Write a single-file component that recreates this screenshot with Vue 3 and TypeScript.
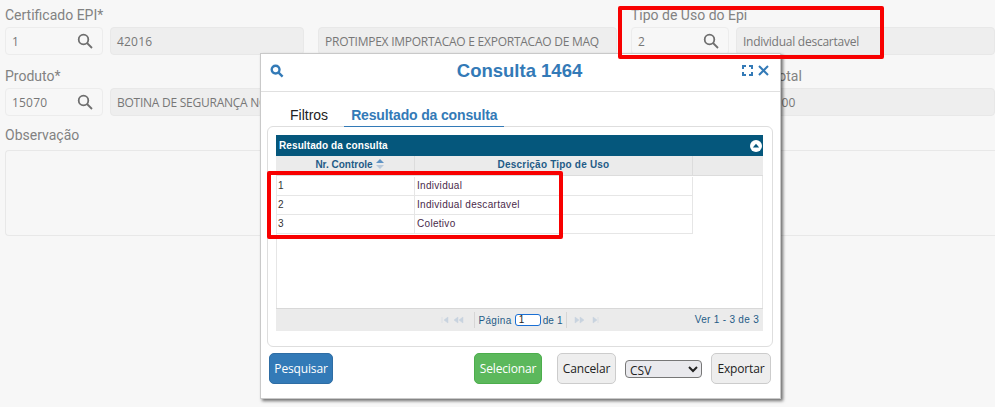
<script setup lang="ts">
const rows: [string, string][] = [
  ['1', 'Individual'],
  ['2', 'Individual descartavel'],
  ['3', 'Coletivo'],
]
</script>

<template>
  <div class="page">
    <div class="form">
      <div class="row">
        <div class="field w98">
          <label>Certificado EPI*</label>
          <div class="input num"><span>1</span><svg class="lens" viewBox="0 0 16 16"><circle cx="6.5" cy="6.5" r="4.8" /><path d="M10 10l5 5" /></svg></div>
        </div>
        <div class="field w194">
          <label>&nbsp;</label>
          <div class="input ro num"><span>42016</span></div>
        </div>
        <div class="field w299 ml">
          <label>&nbsp;</label>
          <div class="input ro"><span>PROTIMPEX IMPORTACAO E EXPORTACAO DE MAQ</span></div>
        </div>
        <div class="field w98 ml">
          <label>Tipo de Uso do Epi</label>
          <div class="input num"><span>2</span><svg class="lens" viewBox="0 0 16 16"><circle cx="6.5" cy="6.5" r="4.8" /><path d="M10 10l5 5" /></svg></div>
        </div>
        <div class="field grow">
          <label>&nbsp;</label>
          <div class="input ro"><span>Individual descartavel</span></div>
        </div>
      </div>
      <div class="row">
        <div class="field w98">
          <label>Produto*</label>
          <div class="input num"><span>15070</span><svg class="lens" viewBox="0 0 16 16"><circle cx="6.5" cy="6.5" r="4.8" /><path d="M10 10l5 5" /></svg></div>
        </div>
        <div class="field w500">
          <label>&nbsp;</label>
          <div class="input ro"><span>BOTINA DE SEGURANÇA NOBUCK</span></div>
        </div>
        <div class="field grow total">
          <label>Valor Total</label>
          <div class="input ro num"><span>100,00</span></div>
        </div>
      </div>
      <div class="obs">
        <label>Observação</label>
        <div class="area"></div>
      </div>
    </div>

    <div class="modal">
      <header class="m-head">
        <svg class="m-search" viewBox="0 0 14 14"><circle cx="5.6" cy="5.6" r="3.9" /><path d="M8.6 8.6l4 4" /></svg>
        <h1>Consulta 1464</h1>
        <div class="m-tools">
          <svg class="m-expand" viewBox="0 0 11 11"><path d="M1 4V1h3M7 1h3v3M10 7v3H7M4 10H1V7" /></svg>
          <svg class="m-close" viewBox="0 0 11 11"><path d="M1 1l9 9M10 1l-9 9" /></svg>
        </div>
      </header>
      <div class="m-body">
        <nav class="tabs">
          <a class="tab">Filtros</a>
          <a class="tab active">Resultado da consulta</a>
        </nav>
        <section class="panel">
          <div class="grid">
            <div class="g-title">
              <span>Resultado da consulta</span>
              <svg class="collapse" viewBox="0 0 12 12"><circle cx="6" cy="6" r="6" fill="#fff" /><path d="M2.8 7.4L6 3.8l3.2 3.6z" fill="#05577c" /></svg>
            </div>
            <div class="g-head">
              <div class="c1"><span class="nr">Nr. Controle</span> <svg class="sort" viewBox="0 0 8 10"><path d="M4 0l4 4H0z" fill="#5f93c4" /><path d="M4 10L0 6h8z" fill="#b9c9da" /></svg></div>
              <div class="c2">Descrição Tipo de Uso</div>
              <div class="c3"></div>
            </div>
            <div class="g-body">
              <div v-for="r in rows" :key="r[0]" class="g-row">
                <div class="c1">{{ r[0] }}</div>
                <div class="c2">{{ r[1] }}</div>
              </div>
            </div>
            <div class="pager">
              <div class="p-center">
                <svg class="p-ico" viewBox="0 0 26 8"><path d="M1 1v6M3 4l4-3v6zM18 4l4-3v6zM13 4l4-3v6z" /></svg>
                <i class="sep"></i>
                <span>Página</span><span class="p-input">1</span><span class="p-of">de 1</span>
                <i class="sep"></i>
                <svg class="p-ico" viewBox="0 0 26 8"><path d="M1 1l4 3-4 3zM6 1l4 3-4 3zM19 1l4 3-4 3zM24 1v6" /></svg>
              </div>
              <span class="p-info">Ver 1 - 3 de 3</span>
            </div>
          </div>
        </section>
        <footer class="actions">
          <button class="btn primary">Pesquisar</button>
          <button class="btn success">Selecionar</button>
          <button class="btn cancel">Cancelar</button>
          <select class="fmt"><option>CSV</option></select>
          <button class="btn export">Exportar</button>
        </footer>
      </div>
    </div>

    <div class="mark mark-a"></div>
    <div class="mark mark-b"></div>
  </div>
</template>

<style>
html, body { margin: 0; background: #f7f7f7; }
</style>

<style scoped>
.page {
  position: relative;
  width: 995px;
  height: 407px;
  overflow: hidden;
  background: #f7f7f7;
  font-family: "Open Sans", sans-serif;
  color: #777;
}
.form { padding: 5px 0 0 5px; }
.row { display: flex; gap: 7px; margin-bottom: 11px; }
.field { display: flex; flex-direction: column; flex: none; min-width: 0; }
.w98 { width: 98px; }
.w194 { width: 194px; }
.w299 { width: 299px; }
.w500 { width: 619px; }
.ml { margin-left: 7px; }
.grow { flex: 1; min-width: 0; }
label {
  display: block;
  height: 22px;
  line-height: 20px;
  font-family: Roboto, sans-serif;
  font-size: 14px;
  color: #828282;
  white-space: nowrap;
}
.input {
  box-sizing: border-box;
  height: 28px;
  display: flex;
  align-items: center;
  justify-content: space-between;
  padding: 0 9px 0 6px;
  border: 1px solid #ececec;
  border-radius: 4px;
  font-size: 12px;
  letter-spacing: -0.25px;
  color: #777;
  white-space: nowrap;
  overflow: hidden;
}
.input.num { letter-spacing: 0.2px; }
.input.ro { background: #eee; border-color: #e8e8e8; }
.lens { width: 16px; height: 16px; flex: none; fill: none; stroke: #6f6f6f; stroke-width: 1.8; }
.total .input { padding-left: 20px; }
.total label { margin-left: -1px; }
.obs { margin-top: -1px; }
.obs label { height: 24px; line-height: 19px; }
.area {
  box-sizing: border-box;
  height: 86px;
  border: 1px solid #e8e8e8;
  border-right: 0;
  border-radius: 4px 0 0 4px;
}

.modal {
  position: absolute;
  left: 260px;
  top: 53px;
  box-sizing: border-box;
  width: 521px;
  height: 346px;
  background: #fff;
  border: 1px solid #c9c9c9;
  box-shadow: 2px 2px 3px rgba(0, 0, 0, 0.55);
  display: flex;
  flex-direction: column;
}
.m-head {
  position: relative;
  flex: none;
  box-sizing: border-box;
  height: 38px;
  padding-bottom: 3px;
  border-bottom: 1px solid #e0e0e0;
  display: flex;
  align-items: center;
  justify-content: center;
}
h1 {
  margin: 0 2px 0 0;
  font-family: "Liberation Sans", sans-serif;
  font-size: 18.5px;
  font-weight: 700;
  color: #337ab7;
}
.m-search {
  position: absolute;
  left: 9px;
  top: 10px;
  width: 14px;
  height: 14px;
  fill: none;
  stroke: #337ab7;
  stroke-width: 2.4;
}
.m-tools {
  position: absolute;
  right: 11px;
  top: 11px;
  display: flex;
  gap: 5px;
  align-items: center;
}
.m-expand { width: 11px; height: 11px; fill: none; stroke: #337ab7; stroke-width: 2; }
.m-close { width: 11px; height: 11px; fill: none; stroke: #337ab7; stroke-width: 2; }
.m-body { flex: 1; padding: 0 7px 0 6px; display: flex; flex-direction: column; min-height: 0; }
.tabs { display: flex; height: 35px; padding-left: 23px; align-items: flex-end; gap: 16px; flex: none; position: relative; z-index: 1; }
.tab {
  font-family: "Liberation Sans", sans-serif;
  font-size: 14px;
  line-height: 20px;
  color: #222;
  padding: 0 0 2px;
}
.tab.active {
  color: #337ab7;
  font-weight: 700;
  letter-spacing: -0.15px;
  padding: 0 7px 1px;
  border-bottom: 1px solid #337ab7;
}
.panel {
  box-sizing: border-box;
  flex: none;
  height: 221px;
  margin-top: -1px;
  padding: 8px 9px 0 8px;
  border: 1px solid #dedede;
  border-radius: 6px;
}
.grid { font-family: "Liberation Sans", sans-serif; font-size: 10px; }
.g-title {
  height: 21px;
  background: #05577c;
  color: #fff;
  font-weight: 700;
  display: flex;
  align-items: center;
  justify-content: space-between;
  padding: 0 1px 0 3px;
  letter-spacing: 0.1px;
}
.collapse { width: 12px; height: 12px; }
.g-head {
  display: flex;
  height: 20px;
  background: #ebebeb;
  color: #1f5b87;
  font-weight: 700;
  border-bottom: 1px solid #dcdcdc;
  box-sizing: border-box;
  text-align: center;
  line-height: 18px;
  letter-spacing: 0.2px;
}
.c1 { box-sizing: border-box; width: 139px; border-right: 1px solid #dcdcdc; }
.g-head .c1 { padding-left: 9px; }
.nr { letter-spacing: 0; }
.c2 { box-sizing: border-box; width: 278px; border-right: 1px solid #dcdcdc; }
.c3 { flex: 1; }
.sort { width: 8px; height: 10px; vertical-align: -1px; }
.g-body {
  height: 132px;
  padding-top: 1px;
  border-left: 1px solid #e6e6e6;
  border-right: 1px solid #e6e6e6;
  box-sizing: border-box;
}
.g-row {
  display: flex;
  width: 416px;
  height: 19px;
  box-sizing: border-box;
  border-bottom: 1px solid #e6e6e6;
  line-height: 18px;
  color: #333;
  letter-spacing: 0.3px;
}
.g-row .c1 { padding-left: 1px; width: 138px; border-right-color: #e6e6e6; }
.g-row .c2 { padding-left: 2px; border-right-color: #e6e6e6; color: #4a2a4a; }
.pager {
  position: relative;
  height: 23px;
  background: #ebebeb;
  border-top: 1px solid #d8d8d8;
  box-sizing: border-box;
  display: flex;
  align-items: center;
  justify-content: center;
  color: #1f5b87;
  font-size: 10px;
  letter-spacing: 0.35px;
}
.p-center { display: flex; align-items: center; gap: 3px; padding-left: 2px; }
.p-ico { width: 26px; height: 8px; margin: 0 4px; }
.p-ico path { fill: #c8d3df; stroke: #c8d3df; stroke-width: 0.5; }
.sep { width: 1px; height: 16px; background: #d6d6d6; }
.p-input {
  box-sizing: border-box;
  width: 26px;
  height: 12px;
  line-height: 9px;
  border: 1.5px solid #1a6fd4;
  border-radius: 3px;
  background: #fff;
  color: #222;
  padding-left: 3px;
}
.p-of { letter-spacing: 0.1px; margin-left: -1px; }
.p-info { position: absolute; right: 4px; top: 5px; letter-spacing: 0.3px; }
.actions { position: relative; flex: 1; display: flex; align-items: flex-start; padding-top: 6px; }
.btn {
  box-sizing: border-box;
  height: 31px;
  border: 1px solid #ccc;
  border-radius: 5px;
  font-family: "Open Sans", sans-serif;
  font-size: 12px;
  letter-spacing: -0.15px;
  padding: 0;
  color: #222;
  background: #eee;
}
.primary { width: 64px; margin-left: 2px; background: #337ab7; border-color: #2e6da4; color: #fff; }
.success { width: 68px; margin-left: 141px; background: #5cb85c; border-color: #4cae4c; color: #fff; }
.cancel { width: 59px; margin-left: 15px; }
.fmt {
  box-sizing: border-box;
  width: 77px;
  height: 18px;
  margin: 7px 0 0 9px;
  padding: 0;
  border: 1px solid #777;
  border-radius: 4px;
  background-color: #e9e9ed;
  font-family: "Open Sans", sans-serif;
  font-size: 12px;
  color: #222;
}
.export { width: 60px; margin-left: 9px; }

.mark {
  position: absolute;
  box-sizing: border-box;
  border: 4px solid #f80000;
  border-radius: 2px;
  pointer-events: none;
}
.mark-a { left: 618px; top: 6px; width: 266px; height: 53px; }
.mark-b { left: 267px; top: 171px; width: 296px; height: 68px; }
</style>
